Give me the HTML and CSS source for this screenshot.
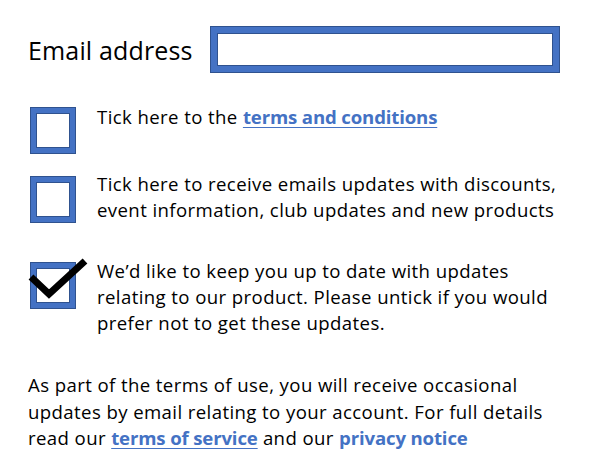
FILE: index.html
```html
<!DOCTYPE html>
<html>
<head>
<meta charset="utf-8">
<link rel="stylesheet" href="styles.css">
</head>
<body>
<div class="page">
  <div class="email-row">
    <label class="email-label" for="email">Email address</label>
    <div class="email-input" id="email"></div>
  </div>

  <div class="opt opt-1">
    <div class="box"></div>
    <p class="opt-text">Tick here to the <a class="link ul" href="#">terms and conditions</a></p>
  </div>

  <div class="opt opt-2">
    <div class="box"></div>
    <p class="opt-text">Tick here to receive emails updates with discounts,<br>event information, club updates and new products</p>
  </div>

  <div class="opt opt-3">
    <div class="box checked">
      <svg class="tick" width="66" height="48" viewBox="0 0 66 48">
        <polyline points="4,20 22,37 58,4" fill="none" stroke="#000" stroke-width="7" stroke-linejoin="miter" stroke-linecap="butt"/>
      </svg>
    </div>
    <p class="opt-text">We’d like to keep you up to date with updates<br>relating to our product. Please untick if you would<br>prefer not to get these updates.</p>
  </div>

  <p class="terms">As part of the terms of use, you will receive occasional<br>updates by email relating to your account. For full details<br>read our <a class="link ul" href="#">terms of service</a> and our <a class="link" href="#">privacy notice</a></p>
</div>
</body>
</html>
```

FILE: styles.css
```css
html, body {
  margin: 0;
  padding: 0;
  background: #fff;
}
body {
  font-family: "Open Sans", "Noto Sans", sans-serif;
  color: #000;
  width: 592px;
  height: 473px;
  overflow: hidden;
}
.page {
  padding: 26px 0 0 28px;
}
.email-row {
  display: flex;
  align-items: center;
  height: 47px;
}
.email-label {
  font-size: 25px;
  width: 182px;
  letter-spacing: 0.15px;
  white-space: nowrap;
}
.email-input {
  box-sizing: border-box;
  width: 350px;
  height: 47px;
  border: 7px solid #4472C4;
  outline: 1px solid #2F528F;
  outline-offset: -1px;
  box-shadow: inset 0 0 0 1px #2F528F;
  background: #fff;
}
.opt {
  display: flex;
  align-items: flex-start;
  margin-left: 2px;
}
.opt-1 { margin-top: 31px; }
.opt-2 { margin-top: 17px; }
.opt-3 { margin-top: 35px; }
.box {
  position: relative;
  box-sizing: border-box;
  flex: none;
  width: 46px;
  height: 47px;
  margin-top: 3px;
  border: 6px solid #4472C4;
  outline: 1px solid #2F528F;
  outline-offset: -1px;
  box-shadow: inset 0 0 0 1px #2F528F;
  background: #fff;
}
.opt-2 .box { margin-top: 5px; }
.opt-3 .box { margin-top: 4px; }
.tick {
  position: absolute;
  left: -9px;
  top: -11px;
}
.opt-text {
  margin: 0 0 0 21px;
  font-size: 18.6px;
  line-height: 26px;
  letter-spacing: 0.4px;
  white-space: nowrap;
}
.terms {
  margin: 36px 0 0 0;
  font-size: 18.6px;
  line-height: 26.5px;
  letter-spacing: 0.4px;
  white-space: nowrap;
}
.link {
  color: #4472C4;
  font-weight: 700;
  letter-spacing: -0.15px;
  text-decoration: none;
}
.link.ul {
  text-decoration: underline;
  text-decoration-thickness: 1px;
  text-underline-offset: 3px;
}
```
